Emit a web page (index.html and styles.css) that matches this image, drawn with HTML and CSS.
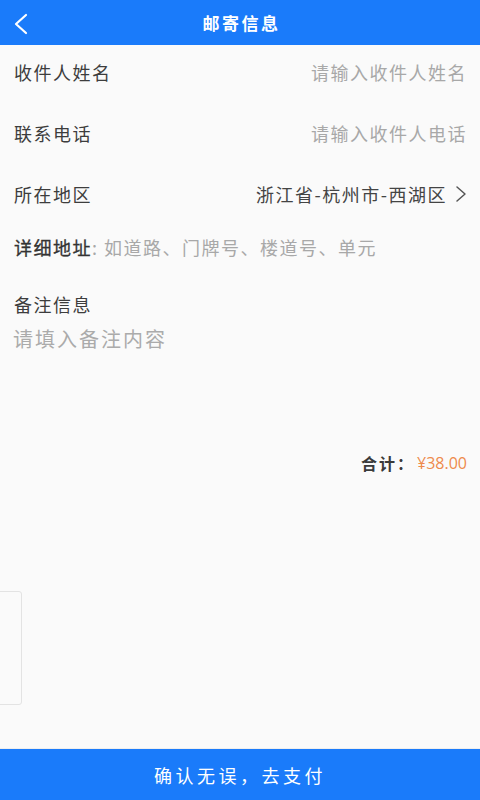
FILE: index.html
```html
<!DOCTYPE html>
<html lang="zh-CN">
<head>
<meta charset="utf-8">
<title>邮寄信息</title>
<link rel="stylesheet" href="styles.css">
</head>
<body>
<div class="page">
  <header class="topbar">
    <span class="back">
      <svg width="16" height="22" viewBox="0 0 16 22"><path d="M13 2 L3 11 L13 20" fill="none" stroke="#fff" stroke-width="2.2" stroke-linecap="round" stroke-linejoin="round"/></svg>
    </span>
    <h1 class="title">邮寄信息</h1>
  </header>
  <main class="content">
    <div class="row">
      <span class="label">收件人姓名</span>
      <span class="ph">请输入收件人姓名</span>
    </div>
    <div class="row">
      <span class="label">联系电话</span>
      <span class="ph">请输入收件人电话</span>
    </div>
    <div class="row">
      <span class="label">所在地区</span>
      <span class="value">浙江省-杭州市-西湖区
        <svg class="chev" width="12" height="18" viewBox="0 0 12 18"><path d="M2 2 L10 9 L2 16" fill="none" stroke="#555" stroke-width="1.5" stroke-linecap="round" stroke-linejoin="round"/></svg>
      </span>
    </div>
    <div class="detail">
      <span class="dlabel">详细地址</span><span class="ph">: 如道路、门牌号、楼道号、单元</span>
    </div>
    <div class="remark-label">备注信息</div>
    <div class="remark-ph">请填入备注内容</div>
    <div class="total">
      <span class="total-label">合计：</span><span class="total-price">¥38.00</span>
    </div>
    <div class="side-tab"></div>
  </main>
  <footer class="submit">确认无误，去支付</footer>
</div>
</body>
</html>
```

FILE: styles.css
```css
* { box-sizing: border-box; margin: 0; padding: 0; }
html, body { width: 480px; height: 800px; }
body {
  background: #fafafa;
  font-family: "Noto Sans CJK SC", "Noto Sans", sans-serif;
  color: #3a3a3a;
}
.page {
  display: flex;
  flex-direction: column;
  height: 800px;
}
.topbar {
  height: 45px;
  background: #1a7bfa;
  display: flex;
  align-items: center;
  justify-content: center;
  position: relative;
  flex: none;
}
.back {
  position: absolute;
  left: 13px;
  top: 13px;
  display: flex;
}
.title {
  color: #fff;
  font-size: 17px;
  font-weight: 700;
  letter-spacing: 2.5px;
  margin-left: 3px;
}
.content {
  flex: 1;
  position: relative;
  padding: 0 13px 0 14px;
}
.row {
  height: 61px;
  display: flex;
  align-items: center;
  justify-content: space-between;
  padding-bottom: 7px;
}
.label, .ph, .value, .dlabel {
  font-size: 18px;
  letter-spacing: 1.5px;
  line-height: 26px;
}
.label { color: #3d3d3d; }
.ph { color: #a8a8a8; }
.value {
  color: #444;
  display: flex;
  align-items: center;
}
.chev { margin-left: 8px; }
.detail {
  height: 38px;
  display: flex;
  align-items: center;
}
.dlabel {
  color: #333;
  -webkit-text-stroke: 0.3px #333;
}
.remark-label {
  margin-top: 25px;
  font-size: 18px;
  letter-spacing: 1.5px;
  line-height: 26px;
  color: #3d3d3d;
}
.remark-ph {
  margin-top: 8px;
  font-size: 20px;
  letter-spacing: 2px;
  line-height: 28px;
  color: #ababab;
  margin-left: -1px;
}
.total {
  margin-top: 98px;
  display: flex;
  justify-content: flex-end;
  align-items: center;
  line-height: 24px;
}
.total-label {
  font-size: 16px;
  font-weight: 700;
  color: #3a3a3a;
  letter-spacing: 2px;
  margin-right: 2px;
}
.total-price {
  font-size: 16px;
  color: #ee8a4c;
  font-family: "Open Sans", "Noto Sans", sans-serif;
}
.side-tab {
  position: absolute;
  left: -4px;
  top: 546px;
  width: 26px;
  height: 114px;
  border: 1px solid #e3e3e3;
  border-radius: 3px;
  background: #fafafa;
}
.submit {
  flex: none;
  height: 52px;
  background: #1a7bfa;
  color: #fff;
  font-size: 18px;
  letter-spacing: 3.5px;
  display: flex;
  align-items: center;
  justify-content: center;
  border-top: 1px solid #eee;
}
```
